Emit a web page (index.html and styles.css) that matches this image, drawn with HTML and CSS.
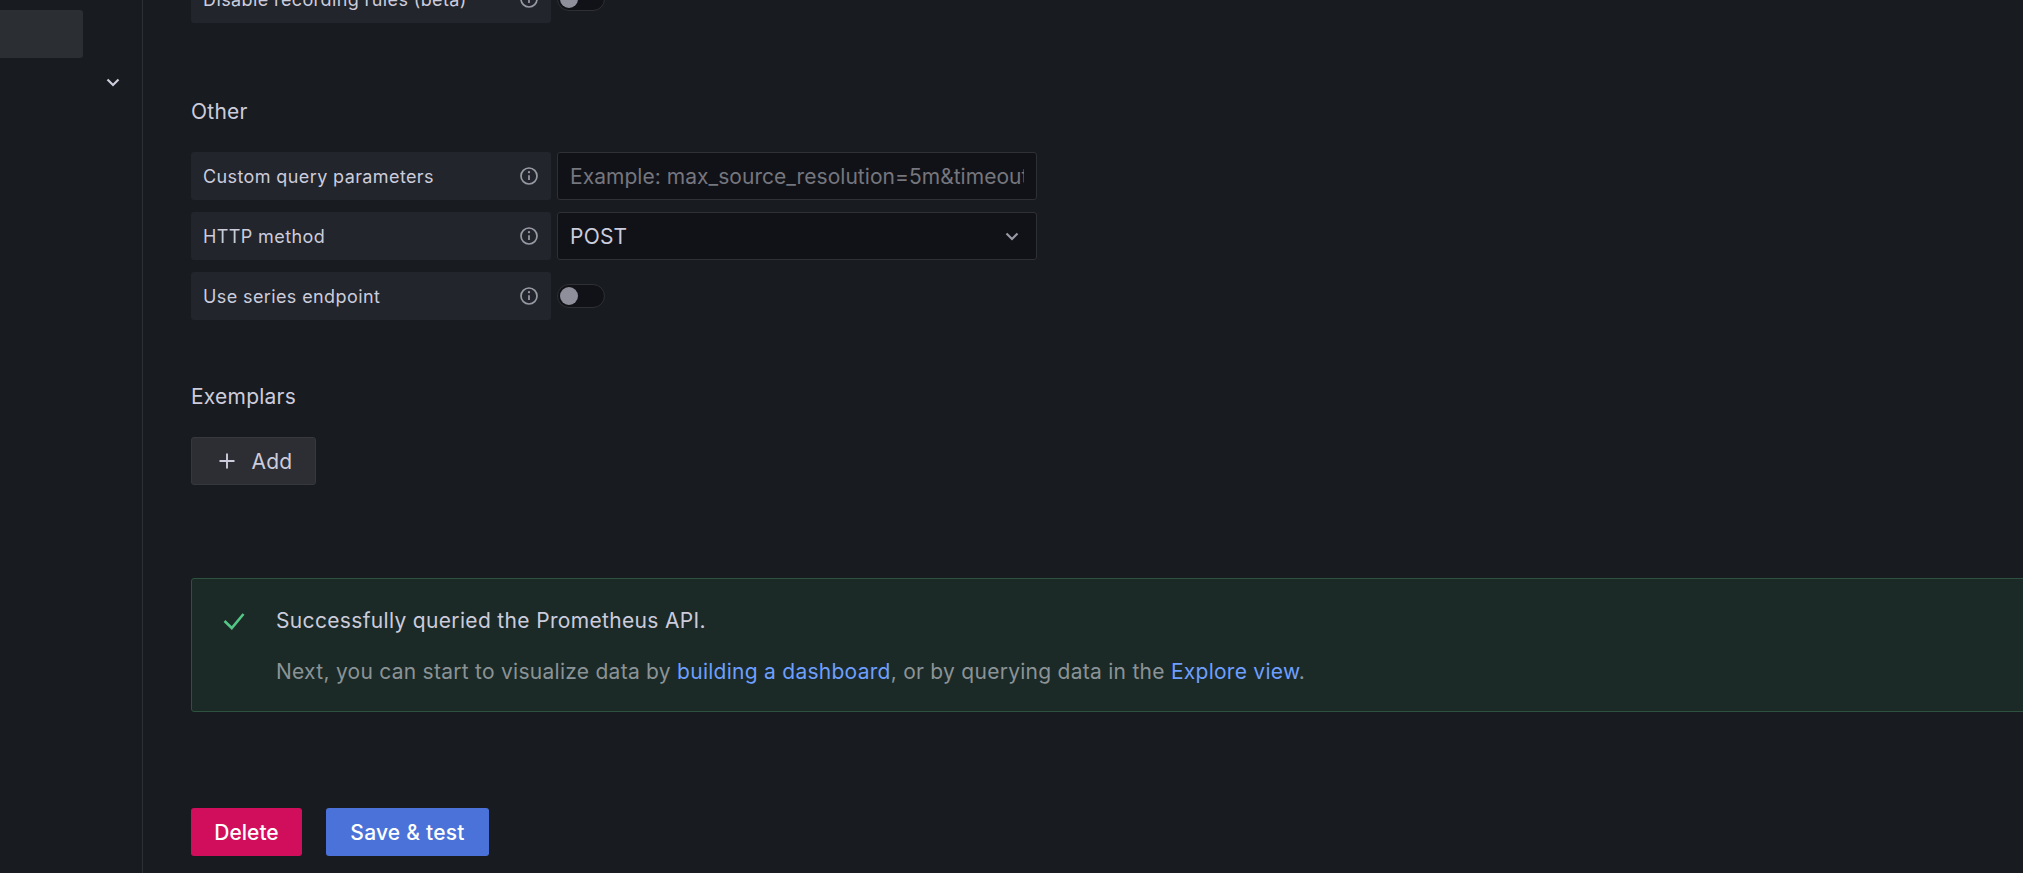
FILE: index.html
```html
<!DOCTYPE html>
<html lang="en">
<head>
<meta charset="utf-8">
<title>Prometheus data source settings</title>
<link rel="stylesheet" href="styles.css">
</head>
<body>
<div class="page">
  <aside class="sidebar">
    <div class="nav-selected"></div>
    <div class="nav-row">
      <svg class="nav-chevron" viewBox="0 0 24 24"><path d="M6.5 9.5 12 15l5.5-5.5" /></svg>
    </div>
  </aside>
  <main class="main">
    <div class="row row-clipped">
      <div class="label"><span>Disable recording rules (beta)</span>
        <svg class="info" viewBox="0 0 24 24"><circle cx="12" cy="12" r="8"/><path d="M12 11.2v4.8"/><circle class="dot" cx="12" cy="8.2" r="1.1"/></svg>
      </div>
      <div class="switch"><div class="knob"></div></div>
    </div>

    <h3 class="section-title section-other">Other</h3>
    <div class="rows">
      <div class="row">
        <div class="label"><span>Custom query parameters</span>
          <svg class="info" viewBox="0 0 24 24"><circle cx="12" cy="12" r="8"/><path d="M12 11.2v4.8"/><circle class="dot" cx="12" cy="8.2" r="1.1"/></svg>
        </div>
        <div class="field"><span class="placeholder">Example: max_source_resolution=5m&amp;timeout=10</span></div>
      </div>
      <div class="row">
        <div class="label"><span>HTTP method</span>
          <svg class="info" viewBox="0 0 24 24"><circle cx="12" cy="12" r="8"/><path d="M12 11.2v4.8"/><circle class="dot" cx="12" cy="8.2" r="1.1"/></svg>
        </div>
        <div class="field field-select"><span class="value">POST</span>
          <svg class="select-chevron" viewBox="0 0 24 24"><path d="M6.5 9.5 12 15l5.5-5.5" /></svg>
        </div>
      </div>
      <div class="row">
        <div class="label"><span>Use series endpoint</span>
          <svg class="info" viewBox="0 0 24 24"><circle cx="12" cy="12" r="8"/><path d="M12 11.2v4.8"/><circle class="dot" cx="12" cy="8.2" r="1.1"/></svg>
        </div>
        <div class="switch"><div class="knob"></div></div>
      </div>
    </div>

    <h3 class="section-title section-exemplars">Exemplars</h3>
    <button class="btn btn-add">
      <svg class="plus" viewBox="0 0 24 24"><path d="M12 4.5v15M4.5 12h15"/></svg>
      <span>Add</span>
    </button>

    <div class="alert">
      <svg class="check" viewBox="0 0 24 24"><path d="M2.5 13 9.8 20 21.5 6"/></svg>
      <div class="alert-body">
        <div class="alert-title">Successfully queried the Prometheus API.</div>
        <div class="alert-text">Next, you can start to visualize data by <a href="#">building a dashboard</a>, or by querying data in the <a href="#">Explore view</a>.</div>
      </div>
    </div>

    <div class="actions">
      <button class="btn btn-delete">Delete</button>
      <button class="btn btn-save">Save &amp; test</button>
    </div>
  </main>
</div>
</body>
</html>
```
FILE: styles.css
```css
* { box-sizing: border-box; }
html, body { margin: 0; height: 100%; overflow: hidden; }
body {
  background: #181b1f;
  color: #ccccdc;
  font-family: Inter, "Liberation Sans", sans-serif;
  font-size: 21px;
  letter-spacing: 0.01071em;
}
.page { display: flex; height: 873px; overflow: hidden; }
.sidebar {
  flex: 0 0 143px;
  border-right: 1px solid #2c2f34;
  padding-top: 10px;
}
.nav-selected {
  width: 83px;
  height: 48px;
  background: #2b2e33;
  border-radius: 0 3px 3px 0;
}
.nav-row { display: flex; justify-content: flex-end; padding: 12px 17px 0 0; }
.nav-chevron { width: 24px; height: 24px; fill: none; stroke: #ccccdc; stroke-width: 2.2; }
.main { flex: 0 0 1960px; padding: 0 0 0 48px; margin-top: -25px; }
.rows { display: flex; flex-direction: column; gap: 12px; }
.row { display: flex; align-items: center; gap: 6px; height: 48px; }
.label {
  flex: 0 0 360px;
  height: 48px;
  display: flex;
  align-items: center;
  justify-content: space-between;
  padding: 0 10px 0 12px;
  background: #22252b;
  border-radius: 3px;
  font-size: 18px;
  font-weight: 400;
  letter-spacing: 0.39px;
}
.info { width: 24px; height: 24px; fill: none; stroke: #9a9aa6; stroke-width: 1.7; }
.info .dot { fill: #9a9aa6; stroke: none; }
.field {
  width: 480px;
  height: 48px;
  display: flex;
  align-items: center;
  padding: 0 12px;
  background: #111217;
  border: 1px solid #2e3036;
  border-radius: 3px;
  overflow: hidden;
  white-space: nowrap;
}
.placeholder { color: #75767e; overflow: hidden; letter-spacing: 0.04px; }
.field-select { justify-content: space-between; }
.value { color: #ccccdc; }
.select-chevron { width: 24px; height: 24px; fill: none; stroke: #9a9aa6; stroke-width: 2.2; }
.switch {
  width: 48px;
  height: 24px;
  background: #111217;
  border: 1px solid #2e3036;
  border-radius: 12px;
  display: flex;
  align-items: center;
  padding-left: 2px;
}
.knob { width: 18px; height: 18px; border-radius: 50%; background: #8f8f9c; }
.section-title { margin: 0; font-size: 21px; font-weight: 400; line-height: 30px; }
.section-other { margin-top: 74px; margin-bottom: 25px; }
.section-exemplars { margin-top: 62px; margin-bottom: 25px; }
.btn {
  display: inline-flex;
  align-items: center;
  justify-content: center;
  height: 48px;
  border: 0;
  border-radius: 3px;
  font: inherit;
  font-weight: 500;
  letter-spacing: inherit;
  color: #fff;
}
.btn-add {
  width: 125px;
  gap: 13px;
  background: #2d2e34;
  border: 1px solid #36383e;
  color: #ccccdc;
  font-weight: 400;
  letter-spacing: 0.2px;
}
.plus { width: 24px; height: 24px; fill: none; stroke: #ccccdc; stroke-width: 1.9; }
.alert {
  margin-top: 93px;
  height: 134px;
  width: 1900px;
  display: flex;
  background: #1b2a27;
  border: 1px solid #2e5140;
  border-radius: 3px;
  padding: 27px 0 0 30px;
}
.check { width: 24px; height: 24px; margin-top: 2px; fill: none; stroke: #54c585; stroke-width: 2.6; }
.alert-body { margin-left: 30px; }
.alert-title { line-height: 30px; font-weight: 400; letter-spacing: 0.335px; }
.alert-text { margin-top: 21px; line-height: 30px; color: #8b9396; letter-spacing: 0.265px; }
.alert-text a { color: #6e9fff; text-decoration: none; }
.actions { display: flex; gap: 24px; margin-top: 96px; }
.btn-delete { width: 111px; background: #d10e5c; letter-spacing: 0; }
.btn-save { width: 163px; background: #4a72d8; }
```
